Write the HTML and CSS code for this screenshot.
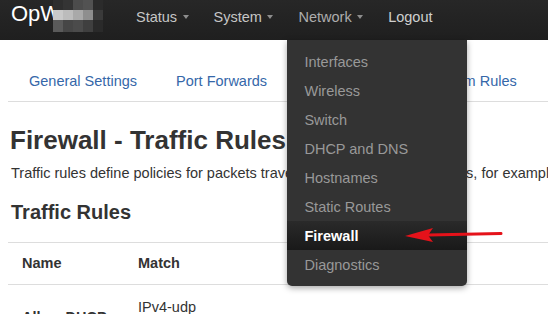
FILE: index.html
```html
<!DOCTYPE html>
<html lang="en">
<head>
<meta charset="utf-8">
<title>Firewall - Traffic Rules</title>
<link rel="stylesheet" href="styles.css">
</head>
<body>
<header class="navbar">
  <div class="brand">
    <span class="brand-text">OpWrt</span>
    <div class="mosaic">
      <span class="m1"></span><span class="m2"></span><span class="m3"></span><span class="m4"></span><span class="m5"></span>
      <span class="m6"></span><span class="m7"></span><span class="m8"></span><span class="m9"></span><span class="m10"></span>
      <span class="m11"></span><span class="m12"></span><span class="m13"></span><span class="m14"></span><span class="m15"></span>
    </div>
  </div>
  <ul class="nav">
    <li class="nav-item"><span class="nav-link">Status</span><span class="caret"></span></li>
    <li class="nav-item"><span class="nav-link">System</span><span class="caret"></span></li>
    <li class="nav-item open"><span class="nav-link">Network</span><span class="caret"></span>
      <ul class="dropdown">
        <li>Interfaces</li>
        <li>Wireless</li>
        <li>Switch</li>
        <li>DHCP and DNS</li>
        <li>Hostnames</li>
        <li>Static Routes</li>
        <li class="active">Firewall</li>
        <li>Diagnostics</li>
      </ul>
    </li>
    <li class="nav-item"><span class="nav-link logout">Logout</span></li>
  </ul>
</header>

<main class="container">
  <ul class="tabs">
    <li><a>General Settings</a></li>
    <li><a>Port Forwards</a></li>
    <li class="active"><a>Traffic Rules</a></li>
    <li><a>Custom Rules</a></li>
  </ul>
  <h2 class="title">Firewall - Traffic Rules</h2>
  <p class="desc">Traffic rules define policies for packets traveling between different zones, for example to reject traffic between certain hosts or to open WAN ports on the router.</p>
  <h3 class="section">Traffic Rules</h3>
  <table class="rules">
    <colgroup><col class="c-name"><col class="c-match"></colgroup>
    <thead>
      <tr><th>Name</th><th>Match</th></tr>
    </thead>
    <tbody>
      <tr>
        <td class="name">Allow-DHCP-Renew</td>
        <td>IPv4-udp<br>From any host in wan<br>To any router IP at port 68</td>
      </tr>
    </tbody>
  </table>
</main>

<svg class="callout" width="106" height="24" viewBox="0 0 106 24" aria-hidden="true">
  <line x1="28" y1="13" x2="101" y2="11.5" stroke="#e5121a" stroke-width="3" stroke-linecap="round"/>
  <polygon points="5,14 33,6 28,13.3 33,20" fill="#e5121a"/>
</svg>
</body>
</html>
```

FILE: styles.css
```css
html, body {
  margin: 0;
  padding: 0;
}
body {
  position: relative;
  width: 548px;
  height: 314px;
  overflow: hidden;
  background: #fff;
  color: #333;
  font-family: "Liberation Sans", Arial, sans-serif;
  font-size: 14.5px;
  line-height: 20px;
}
ul {
  list-style: none;
  margin: 0;
  padding: 0;
}

/* navbar */
.navbar {
  position: relative;
  z-index: 10;
  display: flex;
  height: 40px;
  padding-left: 11px;
  background: linear-gradient(#272727, #1f1f1f);
}
.brand {
  position: relative;
  flex: 0 0 125px;
  padding-top: 1px;
  overflow: hidden;
}
.brand-text {
  display: block;
  font-size: 22px;
  line-height: 26px;
  color: #fff;
  white-space: nowrap;
}
.mosaic {
  position: absolute;
  left: 42px;
  top: 0;
  display: grid;
  grid-template-columns: repeat(5, 10px);
  grid-template-rows: 10px 10px 12px;
}
.m1 { background: #2e2e2e; }
.m2 { background: #343434; }
.m3 { background: #4c4c4c; }
.m4 { background: #525252; }
.m5 { background: #2b2b2b; }
.m6 { background: #c9c9c9; }
.m7 { background: #bcbcbc; }
.m8 { background: #a9a9a9; }
.m9 { background: #8e8e8e; }
.m10 { background: #3a3a3a; }
.m11 { background: #5a5a5a; }
.m12 { background: #464646; }
.m13 { background: #4b4b4b; }
.m14 { background: #3f3f3f; }
.m15 { background: #2a2a2a; }

.nav {
  display: flex;
  gap: 25px;
}
.nav-item {
  position: relative;
  display: flex;
  align-items: flex-start;
  box-sizing: border-box;
  height: 40px;
  padding-top: 7px;
}
.nav-link {
  color: #c6c6c6;
  white-space: nowrap;
}
.open .nav-link {
  color: #adadad;
}
.logout {
  color: #cfcfcf;
}
.caret {
  width: 0;
  height: 0;
  margin: 8px 0 0 5.5px;
  border-top: 4px solid #8d8d8d;
  border-left: 3.5px solid transparent;
  border-right: 3.5px solid transparent;
}

.dropdown {
  position: absolute;
  top: 40px;
  left: -11px;
  width: 180px;
  padding: 7px 0;
  background: #333;
  border-radius: 0 0 5px 5px;
  box-shadow: 0 2px 6px rgba(0, 0, 0, 0.35);
}
.dropdown li {
  padding: 4.5px 17px;
  color: #999;
  white-space: nowrap;
}
.dropdown li.active {
  color: #fff;
  font-weight: bold;
  background: linear-gradient(#2a2a2a, #191919);
}

/* content */
.container {
  padding-left: 8px;
}
.tabs {
  display: flex;
  margin-top: 21px;
  padding-left: 1.5px;
  border-bottom: 1px solid #ddd;
}
.tabs a {
  display: block;
  padding: 10px 19.5px;
  color: #3567a9;
  white-space: nowrap;
}
.title {
  margin: 22.6px 0 0 2px;
  font-size: 26px;
  line-height: 30px;
  font-weight: bold;
  color: #333;
  white-space: nowrap;
}
.desc {
  margin: 8px 0 0 3px;
  white-space: nowrap;
}
.section {
  margin: 17.3px 0 0 3px;
  font-size: 20px;
  line-height: 24px;
  font-weight: bold;
  color: #333;
}
.rules {
  margin-top: 18px;
  width: 540px;
  table-layout: fixed;
  border-collapse: collapse;
  border-top: 1px solid #ddd;
}
.c-name { width: 116px; }
.rules th {
  padding: 10px 14px 11px;
  text-align: left;
  font-weight: bold;
  border-bottom: 1px solid #ddd;
}
.rules td {
  padding: 12px 14px;
  vertical-align: middle;
  white-space: nowrap;
}
.rules td.name {
  padding-right: 6px;
  font-weight: bold;
  white-space: normal;
}

.callout {
  position: absolute;
  left: 400px;
  top: 222px;
  z-index: 20;
}
```
